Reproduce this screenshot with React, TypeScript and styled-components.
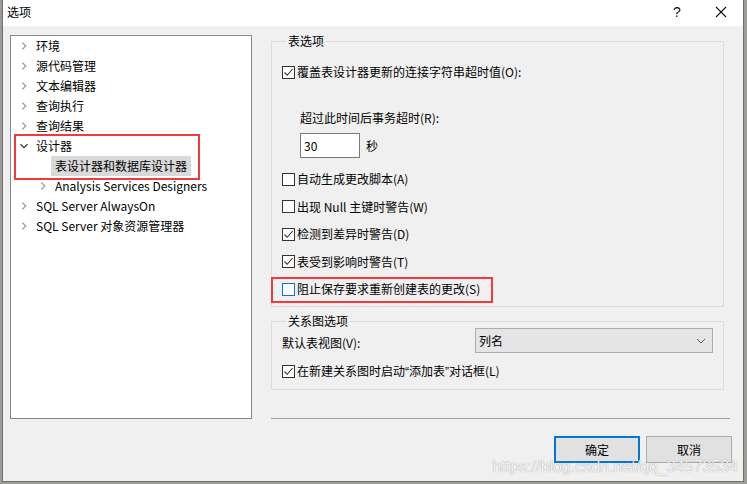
import React from "react";
import styled, { createGlobalStyle } from "styled-components";

const GlobalStyle = createGlobalStyle`
  html, body {
    margin: 0;
    padding: 0;
    background: #9c9c98;
  }
  body {
    font-family: "Noto Sans CJK SC", "Noto Sans", sans-serif;
    font-size: 12px;
    color: #000;
  }
`;

const Page = styled.div`
  width: 747px;
  height: 484px;
  padding-left: 2px;
  box-sizing: border-box;
  overflow: hidden;
`;

const Window = styled.div`
  position: relative;
  width: 742px;
  height: 482px;
  box-sizing: border-box;
  border: 1px solid #6f6f6f;
  border-top: none;
  background: #f0f0f0;
  display: flex;
  flex-direction: column;
`;

const TitleBar = styled.div`
  height: 26px;
  background: #fff;
  display: flex;
  align-items: center;
  padding-left: 4px;
  line-height: 16px;
  padding-bottom: 2px;
  box-sizing: border-box;
`;

const Title = styled.div`
  flex: 1;
`;

const TitleButton = styled.div`
  width: 44px;
  display: flex;
  justify-content: center;
  font-family: "Liberation Sans", sans-serif;
  font-size: 14px;
  color: #111;
`;

const Body = styled.div`
  flex: 1;
  display: flex;
  gap: 19px;
  padding: 9px 0 0 7px;
  align-items: flex-start;
`;

const Tree = styled.div`
  width: 242px;
  height: 384px;
  box-sizing: border-box;
  border: 1px solid #828790;
  background: #fff;
`;

const Row = styled.div<{ $level?: number }>`
  height: 20px;
  display: flex;
  align-items: center;
  padding-left: ${(p) => 8 + (p.$level ?? 0) * 19}px;
  white-space: nowrap;
  line-height: 16px;
`;

const Arrow = styled.span`
  width: 10px;
  height: 10px;
  margin-right: 7px;
  display: flex;
  align-items: center;
  justify-content: center;
`;

const NodeText = styled.span<{ $selected?: boolean }>`
  padding: 2px 4px;
  margin-left: -4px;
  background: ${(p) => (p.$selected ? "#d9d9d9" : "transparent")};
`;

const Marked = styled.div<{ $left: number; $width: number }>`
  position: relative;
  &::after {
    content: "";
    position: absolute;
    left: ${(p) => p.$left}px;
    width: ${(p) => p.$width}px;
    top: -2px;
    bottom: -4px;
    border: 2px solid #ee3b3b;
    box-sizing: border-box;
    pointer-events: none;
  }
`;

const RightColumn = styled.div`
  width: 461px;
  display: flex;
  flex-direction: column;
  align-items: flex-start;
`;

const Group = styled.fieldset<{ $pt: number; $pb: number }>`
  width: 453px;
  box-sizing: border-box;
  margin: 0;
  border: 1px solid #dcdcdc;
  padding: ${(p) => p.$pt}px 10px ${(p) => p.$pb}px 10px;
  display: flex;
  flex-direction: column;
  & + & {
    margin-top: 8px;
  }
`;

const Legend = styled.legend`
  padding: 0 2px;
  margin-left: 4px;
  line-height: 12px;
  font-size: 12px;
`;

const CheckRow = styled.label<{ $mt?: number }>`
  height: 20px;
  display: flex;
  align-items: center;
  gap: 2px;
  margin-top: ${(p) => p.$mt ?? 0}px;
  white-space: nowrap;
  line-height: 16px;
`;

const Box = styled.span<{ $focus?: boolean }>`
  width: 13px;
  height: 13px;
  box-sizing: border-box;
  border: 1px solid ${(p) => (p.$focus ? "#0078d7" : "#333")};
  background: #fff;
  display: flex;
  align-items: center;
  justify-content: center;
  flex-shrink: 0;
`;

const Quote = styled.span`
  font-family: "Liberation Sans", sans-serif;
`;

const SubLabel = styled.div`
  margin: 26px 0 0 18px;
  height: 20px;
  line-height: 20px;
`;

const SpinRow = styled.div`
  margin: 5px 0 0 18px;
  display: flex;
  align-items: center;
  gap: 6px;
`;

const NumberBox = styled.div`
  width: 60px;
  height: 25px;
  box-sizing: border-box;
  border: 1px solid #7a7a7a;
  background: #fff;
  padding-left: 3px;
  display: flex;
  align-items: center;
`;

const CheckList = styled.div`
  margin-top: 11px;
  display: flex;
  flex-direction: column;
  gap: 7.5px;
`;

const FieldRow = styled.div`
  display: flex;
  align-items: center;
  height: 25px;
  margin-top: 1px;
`;

const FieldLabel = styled.div`
  width: 193px;
  padding-top: 3px;
`;

const Select = styled.div`
  flex: 1;
  height: 25px;
  box-sizing: border-box;
  border: 1px solid #adadad;
  background: #e5e5e5;
  display: flex;
  align-items: center;
  justify-content: space-between;
  padding: 0 6px 0 3px;
`;

const Separator = styled.div`
  width: 459px;
  height: 1px;
  background: #a0a0a0;
  margin-top: 28px;
`;

const Buttons = styled.div`
  width: 461px;
  margin-top: 17px;
  display: flex;
  justify-content: flex-end;
  gap: 6px;
`;

const Button = styled.div<{ $default?: boolean }>`
  width: 86px;
  height: 27px;
  box-sizing: border-box;
  border: ${(p) => (p.$default ? "2px solid #0078d7" : "1px solid #adadad")};
  background: #e1e1e1;
  display: flex;
  align-items: center;
  justify-content: center;
`;

const Watermark = styled.div`
  position: absolute;
  right: 5px;
  bottom: 5px;
  font-family: "Liberation Sans", sans-serif;
  font-size: 16px;
  color: rgba(255, 255, 255, 0.9);
  text-shadow: 0 0 1px rgba(0, 0, 0, 0.45);
  pointer-events: none;
`;

const Chevron = ({ open }: { open?: boolean }) =>
  open ? (
    <svg width="10" height="10" viewBox="0 0 10 10">
      <path d="M1.5 3.2 L5 6.7 L8.5 3.2" fill="none" stroke="#3c3c3c" strokeWidth="1.3" />
    </svg>
  ) : (
    <svg width="10" height="10" viewBox="0 0 10 10">
      <path d="M3.3 1.5 L6.8 5 L3.3 8.5" fill="none" stroke="#a0a0a0" strokeWidth="1.3" />
    </svg>
  );

const Check = ({ on, focus }: { on?: boolean; focus?: boolean }) => (
  <Box $focus={focus}>
    {on && (
      <svg width="11" height="11" viewBox="0 0 11 11">
        <path d="M1.5 5.5 L4.2 8.3 L9.6 2" fill="none" stroke="#333" strokeWidth="1.1" />
      </svg>
    )}
  </Box>
);

const TreeNode = ({
  label,
  level,
  open,
  leaf,
  selected,
}: {
  label: string;
  level?: number;
  open?: boolean;
  leaf?: boolean;
  selected?: boolean;
}) => (
  <Row $level={level}>
    <Arrow>{!leaf && <Chevron open={open} />}</Arrow>
    <NodeText $selected={selected}>{label}</NodeText>
  </Row>
);

const warnings = [
  { text: "自动生成更改脚本(A)", on: false },
  { text: "出现 Null 主键时警告(W)", on: false },
  { text: "检测到差异时警告(D)", on: true },
  { text: "表受到影响时警告(T)", on: true },
];

export default function App() {
  return (
    <Page>
      <GlobalStyle />
      <Window>
        <TitleBar>
          <Title>选项</Title>
          <TitleButton>?</TitleButton>
          <TitleButton>
            <svg width="12" height="12" viewBox="0 0 12 12">
              <path d="M1 1 L11 11 M11 1 L1 11" stroke="#111" strokeWidth="1.1" />
            </svg>
          </TitleButton>
        </TitleBar>
        <Body>
          <Tree>
            <TreeNode label="环境" />
            <TreeNode label="源代码管理" />
            <TreeNode label="文本编辑器" />
            <TreeNode label="查询执行" />
            <TreeNode label="查询结果" />
            <Marked $left={3} $width={186}>
              <TreeNode label="设计器" open />
              <TreeNode label="表设计器和数据库设计器" level={1} leaf selected />
            </Marked>
            <TreeNode label="Analysis Services Designers" level={1} />
            <TreeNode label="SQL Server AlwaysOn" />
            <TreeNode label="SQL Server 对象资源管理器" />
          </Tree>
          <RightColumn>
            <Group $pt={15} $pb={7}>
              <Legend>表选项</Legend>
              <CheckRow>
                <Check on />
                覆盖表设计器更新的连接字符串超时值(O):
              </CheckRow>
              <SubLabel>超过此时间后事务超时(R):</SubLabel>
              <SpinRow>
                <NumberBox>30</NumberBox>
                秒
              </SpinRow>
              <CheckList>
                {warnings.map((w) => (
                  <CheckRow key={w.text}>
                    <Check on={w.on} />
                    {w.text}
                  </CheckRow>
                ))}
                <Marked $left={-11} $width={222}>
                  <CheckRow>
                    <Check focus />
                    阻止保存要求重新创建表的更改(S)
                  </CheckRow>
                </Marked>
              </CheckList>
            </Group>
            <Group $pt={0} $pb={8}>
              <Legend>关系图选项</Legend>
              <FieldRow>
                <FieldLabel>默认表视图(V):</FieldLabel>
                <Select>
                  列名
                  <svg width="10" height="6" viewBox="0 0 10 6">
                    <path d="M1 1 L5 5 L9 1" fill="none" stroke="#555" strokeWidth="1" />
                  </svg>
                </Select>
              </FieldRow>
              <CheckRow $mt={8}>
                <Check on />
                <span>
                  在新建关系图时启动<Quote>“</Quote>添加表<Quote>”</Quote>对话框(L)
                </span>
              </CheckRow>
            </Group>
            <Separator />
            <Buttons>
              <Button $default>确定</Button>
              <Button>取消</Button>
            </Buttons>
          </RightColumn>
        </Body>
        <Watermark>https://blog.csdn.net/qq_34573534</Watermark>
      </Window>
    </Page>
  );
}
